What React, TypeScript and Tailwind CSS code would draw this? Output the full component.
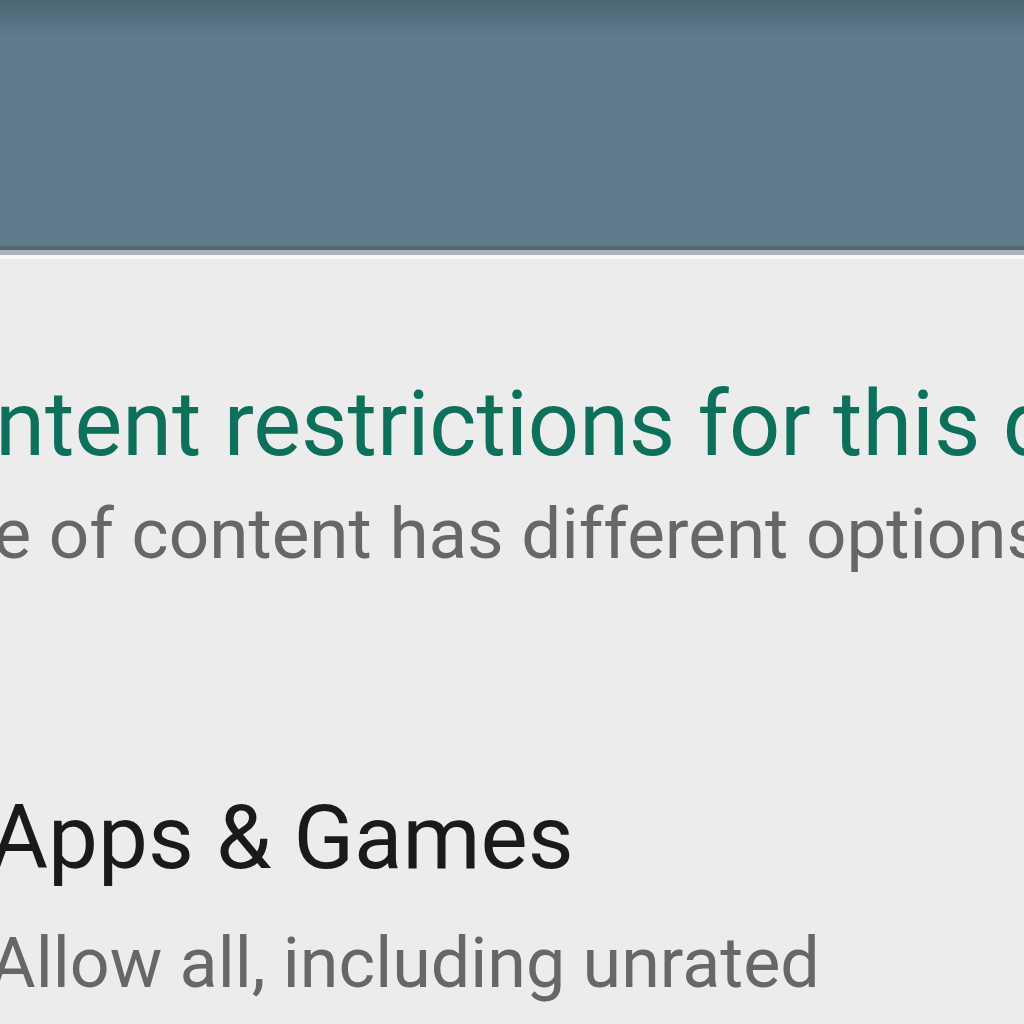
import React from "react";

const App: React.FC = () => {
  return (
    <div className="w-[1024px] h-[1024px] overflow-hidden bg-[#ececec] font-['Roboto',sans-serif]">
      <header className="h-[246px] bg-gradient-to-b from-[#4b6572] via-[#5f7b8a] via-[15%] to-[#5f7b8a]" />
      <div className="h-[4px] bg-[#56666e]" />
      <div className="h-[5px] bg-[#a8b4ba]" />
      <div className="h-[4px] bg-[#f7fafa]" />

      <section className="pt-[121px] whitespace-nowrap">
        <h1 className="ml-[-256px] text-[90px] leading-none text-[#0c705a] font-normal">
          Set content restrictions for this device
        </h1>
        <p className="ml-[-276px] mt-[28px] text-[71px] leading-none text-[#676767]">
          Each type of content has different options
        </p>

        <div className="mt-[224px] ml-[-10px]">
          <h2 className="text-[89px] leading-none text-[#1a1a1a]">Apps &amp; Games</h2>
          <p className="mt-[46px] text-[70px] leading-none text-[#676767]">
            Allow all, including unrated
          </p>
        </div>
      </section>
    </div>
  );
};

export default App;
